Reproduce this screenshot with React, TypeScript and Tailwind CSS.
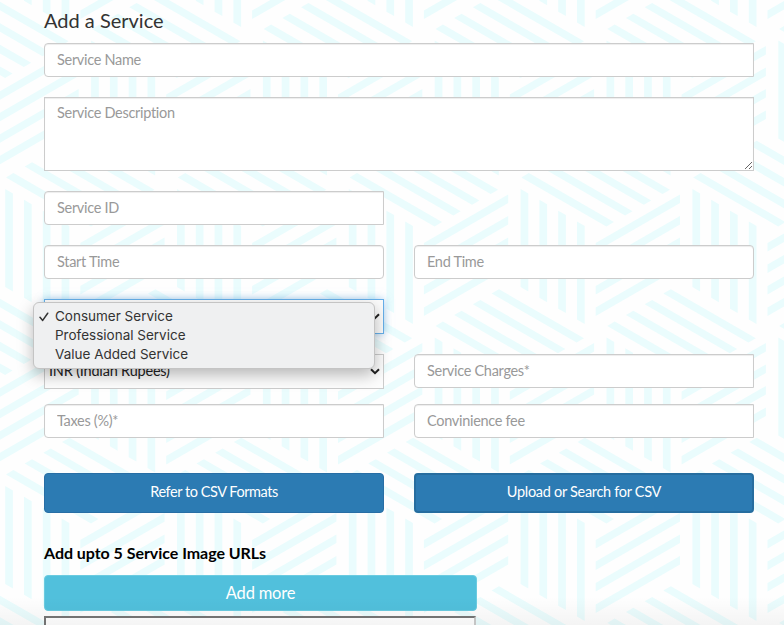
import React from "react";

const PERIOD = 171.8;
const ROW = 148.5;
const STEPS = [0, 1, 2, 3];

/* One cube of the weave: three rhombi, four stripes each. */
function Cube({ x, y }: { x: number; y: number }) {
  return (
    <g transform={`translate(${x} ${y})`}>
      {STEPS.map((i) => (
        <g key={i}>
          <path d={`M${i * 18.8} ${i * 10.85}l7.7 4.4v98l-7.7 -4.4z`} />
          <path d={`M-96.7 ${54 + i * 21.5}l84.3 -48.6v8.6l-84.3 48.6z`} />
          <path
            d={`M${-21.6 - i * 18.7} ${100.2 + i * 10.8}l85 49l-7.4 4.3l-85 -49z`}
          />
        </g>
      ))}
    </g>
  );
}

function Backdrop() {
  const cells: React.ReactElement[] = [];
  for (let r = -2; r <= 3; r++) {
    for (let c = -5; c <= 3; c++) {
      const shift = r % 2 === 0 ? 0 : PERIOD / 2;
      cells.push(
        <Cube key={`${r}:${c}`} x={520.6 + c * PERIOD + shift} y={189 + r * ROW} />
      );
    }
  }
  return (
    <svg
      className="absolute inset-0 -z-10"
      width="784"
      height="625"
      viewBox="0 0 784 625"
      fill="#eafcfd"
      aria-hidden="true"
    >
      {cells}
    </svg>
  );
}

const FIELD =
  "block h-[34px] w-full border border-[#ccc] bg-white px-3 pb-px text-[14.5px] leading-5 tracking-[-0.3px] text-[#555] shadow-[inset_0_1px_1px_rgba(0,0,0,0.075)] outline-none placeholder:text-[#999]";

function Field({ label, round = false }: { label: string; round?: boolean }) {
  return (
    <input
      placeholder={label}
      className={`${FIELD} ${round ? "rounded-[4px]" : "rounded-l-[4px]"}`}
    />
  );
}

function Chevron() {
  return (
    <svg width="10" height="7" viewBox="0 0 10 7" fill="none" stroke="#222" strokeWidth="2">
      <path d="M1 1.2l4 4l4 -4" />
    </svg>
  );
}

function Menu() {
  return (
    <div className="absolute -left-[11px] top-[3px] z-10 h-[67px] w-[342px] rounded-[6px] border border-[#c4c4c4] bg-[#eff0f1] pt-[4px] font-[Inter,sans-serif] text-[13.5px] leading-[19px] text-[#333] shadow-[0_6px_16px_rgba(0,0,0,0.28)]">
      {["Consumer Service", "Professional Service", "Value Added Service"].map((item, i) => (
        <div key={item} className="flex h-[19px] items-center">
          <span className="flex w-[21px] pl-[5px]">
            {i === 0 && (
              <svg width="10" height="10" viewBox="0 0 10 10" fill="none" stroke="#333" strokeWidth="1.5" strokeLinecap="round" strokeLinejoin="round">
                <path d="M1 5.2l2.7 3.2l5 -7.2" />
              </svg>
            )}
          </span>
          {item}
        </div>
      ))}
    </div>
  );
}

export default function App() {
  return (
    <main className="relative isolate h-[625px] w-[784px] overflow-hidden bg-[#fefefe] pl-[44px] pr-[30px] font-[Lato,sans-serif]">
      <Backdrop />
      <h1 className="h-[43px] pt-[7px] text-[20px] leading-[26px] text-[#333]">Add a Service</h1>
      <div className="flex flex-col gap-5">
        <Field label="Service Name" />
        <textarea
          placeholder="Service Description"
          className="block h-[74px] w-full resize border border-[#ccc] bg-white px-3 py-[5px] text-[14.5px] leading-5 tracking-[-0.3px] text-[#555] shadow-[inset_0_1px_1px_rgba(0,0,0,0.075)] outline-none placeholder:text-[#999]"
        />
        <div className="w-[340px]">
          <Field label="Service ID" />
        </div>
        <div className="grid grid-cols-2 gap-[30px]">
          <Field label="Start Time" round />
          <Field label="End Time" round />
        </div>
        <div className="relative h-[35px] w-[340px]">
          <div className="flex h-[35px] items-center justify-end border border-[#66afe9] bg-[#fbfbfb] pr-[3px] shadow-[0_0_8px_rgba(102,175,233,0.6)]">
            <Chevron />
          </div>
          <Menu />
        </div>
      </div>
      <div className="mt-5 grid grid-cols-2 gap-x-[30px]">
        <div className="flex h-[35px] items-center justify-between border border-[#ccc] bg-[#fdfdfd] pl-[4px] pr-[3px] text-[14.5px] tracking-[-0.2px] text-[#222]">
          <span className="pb-px">INR (Indian Rupees)</span>
          <Chevron />
        </div>
        <Field label="Service Charges*" />
      </div>
      <div className="mt-[15px] grid grid-cols-2 gap-[30px]">
        <Field label="Taxes (%)*" />
        <Field label="Convinience fee" />
      </div>
      <div className="mt-[35px] grid grid-cols-2 gap-[30px] text-[14.5px] text-white">
        <button className="h-10 rounded-[4px] border border-[#286ea5] bg-[#2c7bb3] pb-[2px] tracking-[-0.45px]">Refer to CSV Formats</button>
        <button className="h-10 rounded-[4px] border-2 border-[#266d9f] bg-[#2c7bb3] pb-[2px] tracking-[-0.3px]">Upload or Search for CSV</button>
      </div>
      <h2 className="mt-[30px] h-[32px] text-[16px] font-bold leading-5 tracking-[-0.04px] text-black">Add upto 5 Service Image URLs</h2>
      <button className="block h-9 w-[433px] rounded-[4px] border border-[#6bcbe0] bg-[#51c0dc] text-[16.5px] tracking-[-0.2px] text-white">Add more</button>
      <div className="mt-[5px] h-[24px] w-[432px] border-2 border-[#767676] border-r-[#ccc] bg-white" />
      <div className="pointer-events-none absolute inset-x-0 bottom-0 h-7 bg-linear-to-b from-transparent to-black/4" />
    </main>
  );
}
